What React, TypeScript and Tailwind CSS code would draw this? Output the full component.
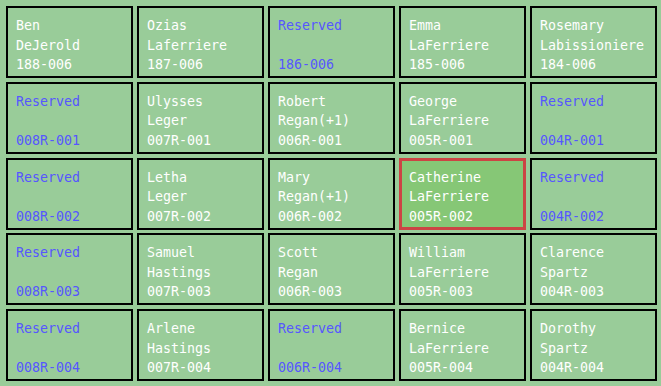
import React from 'react';

type Seat = {
  first: string;
  last: string;
  code: string;
  reserved?: boolean;
  selected?: boolean;
};

const r = (code: string): Seat => ({ first: 'Reserved', last: '', code, reserved: true });
const p = (first: string, last: string, code: string, selected = false): Seat => ({ first, last, code, selected });

const seats: Seat[] = [
  p('Ben', 'DeJerold', '188-006'),
  p('Ozias', 'Laferriere', '187-006'),
  r('186-006'),
  p('Emma', 'LaFerriere', '185-006'),
  p('Rosemary', 'Labissioniere', '184-006'),

  r('008R-001'),
  p('Ulysses', 'Leger', '007R-001'),
  p('Robert', 'Regan(+1)', '006R-001'),
  p('George', 'LaFerriere', '005R-001'),
  r('004R-001'),

  r('008R-002'),
  p('Letha', 'Leger', '007R-002'),
  p('Mary', 'Regan(+1)', '006R-002'),
  p('Catherine', 'LaFerriere', '005R-002', true),
  r('004R-002'),

  r('008R-003'),
  p('Samuel', 'Hastings', '007R-003'),
  p('Scott', 'Regan', '006R-003'),
  p('William', 'LaFerriere', '005R-003'),
  p('Clarence', 'Spartz', '004R-003'),

  r('008R-004'),
  p('Arlene', 'Hastings', '007R-004'),
  r('006R-004'),
  p('Bernice', 'LaFerriere', '005R-004'),
  p('Dorothy', 'Spartz', '004R-004'),
];

const SeatCell: React.FC<{ seat: Seat }> = ({ seat }) => {
  const box = seat.selected
    ? 'border-[3px] border-[#cc4444] bg-[#86c776] pl-[7px] pt-[7px]'
    : 'border-2 border-black pl-[8px] pt-[8px]';
  const color = seat.reserved ? 'text-[#5656ff]' : 'text-white';

  return (
    <div className={`${box} ${color} flex flex-col leading-[19.5px] whitespace-nowrap overflow-hidden`}>
      <span>{seat.first}</span>
      <span>{seat.last || '\u00a0'}</span>
      <span>{seat.code}</span>
    </div>
  );
};

export default function App() {
  return (
    <div
      className="min-h-screen w-[661px] bg-[#99cc99] pt-[6px] pl-[6px] text-[13.3px]"
      style={{ fontFamily: '"DejaVu Sans Mono", "Liberation Mono", monospace' }}
    >
      <div className="grid grid-cols-[repeat(5,127px)] auto-rows-[72px] gap-x-[4px] gap-y-[3.75px]">
        {seats.map((seat) => (
          <SeatCell key={seat.code} seat={seat} />
        ))}
      </div>
    </div>
  );
}
